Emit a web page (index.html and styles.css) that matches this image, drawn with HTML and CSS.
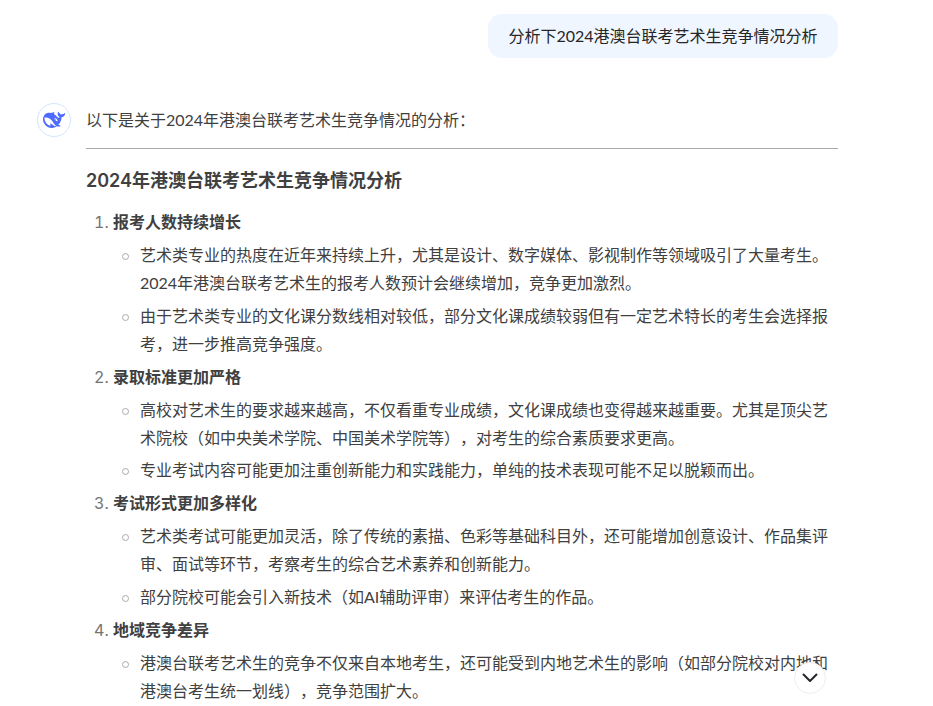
FILE: index.html
```html
<!DOCTYPE html>
<html lang="zh-CN">
<head>
<meta charset="utf-8">
<title>分析下2024港澳台联考艺术生竞争情况分析</title>
<link rel="stylesheet" href="styles.css">
</head>
<body>
<main class="chat">
  <div class="user-row"><div class="bubble">分析下2024港澳台联考艺术生竞争情况分析</div></div>
  <div class="answer">
    <div class="avatar">
      <svg viewBox="0 0 24 24" width="22" height="22"><path fill="#4d6bfe" d="M23.748 4.482c-.254-.124-.364.113-.512.234-.051.039-.094.09-.137.136-.372.397-.806.657-1.373.626-.829-.046-1.537.214-2.163.848-.133-.782-.575-1.248-1.247-1.548-.352-.156-.708-.311-.955-.65-.172-.241-.219-.51-.305-.774-.055-.16-.11-.323-.293-.35-.2-.031-.278.136-.356.276-.313.572-.434 1.202-.422 1.84.027 1.436.633 2.58 1.838 3.393.137.093.172.187.129.323-.082.28-.18.552-.266.833-.055.179-.137.217-.329.14a5.526 5.526 0 01-1.736-1.18c-.857-.828-1.631-1.742-2.597-2.458a11.365 11.365 0 00-.689-.471c-.985-.957.13-1.743.388-1.836.27-.098.093-.432-.779-.428-.872.004-1.67.295-2.687.684a3.055 3.055 0 01-.465.137 9.597 9.597 0 00-2.883-.102c-1.885.21-3.39 1.102-4.497 2.623C.082 8.606-.231 10.684.152 12.85c.403 2.284 1.569 4.175 3.36 5.653 1.858 1.533 3.997 2.284 6.438 2.14 1.482-.085 3.133-.284 4.994-1.86.47.234.962.327 1.78.397.63.059 1.236-.03 1.705-.128.735-.156.684-.837.419-.961-2.155-1.004-1.682-.595-2.113-.926 1.096-1.296 2.746-2.642 3.392-7.003.05-.347.007-.565 0-.845-.004-.17.035-.237.23-.256a4.173 4.173 0 001.545-.475c1.396-.763 1.96-2.015 2.093-3.517.02-.23-.004-.467-.247-.588zM11.581 18c-2.089-1.642-3.102-2.183-3.52-2.16-.392.024-.321.471-.235.763.09.288.207.486.371.739.114.167.192.416-.113.603-.673.416-1.842-.14-1.897-.167-1.361-.802-2.5-1.86-3.301-3.307-.774-1.393-1.224-2.887-1.298-4.482-.02-.386.093-.522.477-.592a4.696 4.696 0 011.529-.039c2.132.312 3.946 1.265 5.468 2.774.868.86 1.525 1.887 2.202 2.891.72 1.066 1.494 2.082 2.48 2.914.348.292.625.514.891.677-.802.09-2.14.11-3.054-.614zm1-6.44a.306.306 0 01.415-.287.302.302 0 01.2.288.306.306 0 01-.31.307.303.303 0 01-.304-.308zm3.11 1.596c-.2.081-.399.151-.59.16a1.245 1.245 0 01-.798-.254c-.274-.23-.47-.358-.552-.758a1.73 1.73 0 01.016-.588c.07-.327-.008-.537-.239-.727-.187-.156-.426-.199-.688-.199a.559.559 0 01-.254-.078c-.11-.055-.2-.19-.114-.358.028-.054.16-.186.192-.21.356-.202.767-.136 1.146.016.352.144.618.408 1.001.782.391.451.462.576.685.914.176.265.336.537.445.848.067.195-.019.354-.25.452z"/></svg>
    </div>
    <article class="markdown">
      <p class="intro">以下是关于2024年港澳台联考艺术生竞争情况的分析：</p>
      <hr class="rule">
      <h3 class="title">2024年港澳台联考艺术生竞争情况分析</h3>
      <ol class="points">
        <li><strong class="point-title">报考人数持续增长</strong>
          <ul class="details">
            <li>艺术类专业的热度在近年来持续上升，尤其是设计、数字媒体、影视制作等领域吸引了大量考生。2024年港澳台联考艺术生的报考人数预计会继续增加，竞争更加激烈。</li>
            <li>由于艺术类专业的文化课分数线相对较低，部分文化课成绩较弱但有一定艺术特长的考生会选择报考，进一步推高竞争强度。</li>
          </ul>
        </li>
        <li><strong class="point-title">录取标准更加严格</strong>
          <ul class="details">
            <li>高校对艺术生的要求越来越高，不仅看重专业成绩，文化课成绩也变得越来越重要。尤其是顶尖艺术院校（如中央美术学院、中国美术学院等），对考生的综合素质要求更高。</li>
            <li>专业考试内容可能更加注重创新能力和实践能力，单纯的技术表现可能不足以脱颖而出。</li>
          </ul>
        </li>
        <li><strong class="point-title">考试形式更加多样化</strong>
          <ul class="details">
            <li>艺术类考试可能更加灵活，除了传统的素描、色彩等基础科目外，还可能增加创意设计、作品集评审、面试等环节，考察考生的综合艺术素养和创新能力。</li>
            <li>部分院校可能会引入新技术（如AI辅助评审）来评估考生的作品。</li>
          </ul>
        </li>
        <li><strong class="point-title">地域竞争差异</strong>
          <ul class="details">
            <li>港澳台联考艺术生的竞争不仅来自本地考生，还可能受到内地艺术生的影响（如部分院校对内地和港澳台考生统一划线），竞争范围扩大。</li>
          </ul>
        </li>
      </ol>
    </article>
  </div>
</main>
<button class="scroll-down" aria-label="滚动到底部">
  <svg viewBox="0 0 16 10" width="16" height="10"><path d="M1.500 1.500 8 8l6.500-6.500" fill="none" stroke="#26262b" stroke-width="2" stroke-linecap="round" stroke-linejoin="round"/></svg>
</button>
</body>
</html>
```
FILE: styles.css
```css
html, body {
  margin: 0;
  height: 100%;
  overflow: hidden;
  background: #fff;
}
body {
  font-family: "Lato", "Noto Sans CJK SC", sans-serif;
  font-size: 16px;
  line-height: 28px;
  color: #404040;
  text-spacing-trim: space-all;
}
.chat {
  width: 752px;
  margin-left: 86px;
  padding-top: 14px;
}
.user-row {
  display: flex;
  justify-content: flex-end;
}
.bubble {
  background: #eff6ff;
  color: #262626;
  border-radius: 14px;
  padding: 8px 20.5px;
}
.answer {
  position: relative;
  margin-top: 48px;
}
.avatar {
  position: absolute;
  left: -49px;
  top: -3px;
  width: 32px;
  height: 32px;
  border: 1px solid #d5e4ff;
  border-radius: 50%;
  display: flex;
  align-items: center;
  justify-content: center;
}
.intro {
  margin: 0;
}
.rule {
  margin: 14px 0 0;
  border: 0;
  border-top: 1px solid #a8a8a8;
}
.title {
  margin: 16px 0 0;
  font-family: "Inter", "Noto Sans CJK SC", sans-serif;
  font-size: 18px;
  line-height: 32px;
  font-weight: 600;
}
.points {
  margin: 11px 0 0;
  padding-left: 27px;
  list-style: decimal;
}
.points > li {
  margin-top: 4.9px;
}
.points > li::marker {
  color: #737373;
  font-family: "Inter", sans-serif;
}
.point-title {
  font-weight: 600;
}
.details {
  margin: 4.9px 0 0;
  padding-left: 27px;
  list-style: none;
}
.details > li {
  position: relative;
  margin-top: 4.9px;
}
.details > li:first-child {
  margin-top: 0;
}
.details > li::before {
  content: "";
  position: absolute;
  left: -18px;
  top: 12px;
  width: 7px;
  height: 7px;
  box-sizing: border-box;
  border: 1.5px solid #aaaaaa;
  border-radius: 50%;
}
.scroll-down {
  position: absolute;
  left: 794px;
  top: 662px;
  width: 32px;
  height: 32px;
  padding: 0;
  background: #fff;
  border: 1px solid #eeeeee;
  border-radius: 50%;
  display: flex;
  align-items: center;
  justify-content: center;
}
```
